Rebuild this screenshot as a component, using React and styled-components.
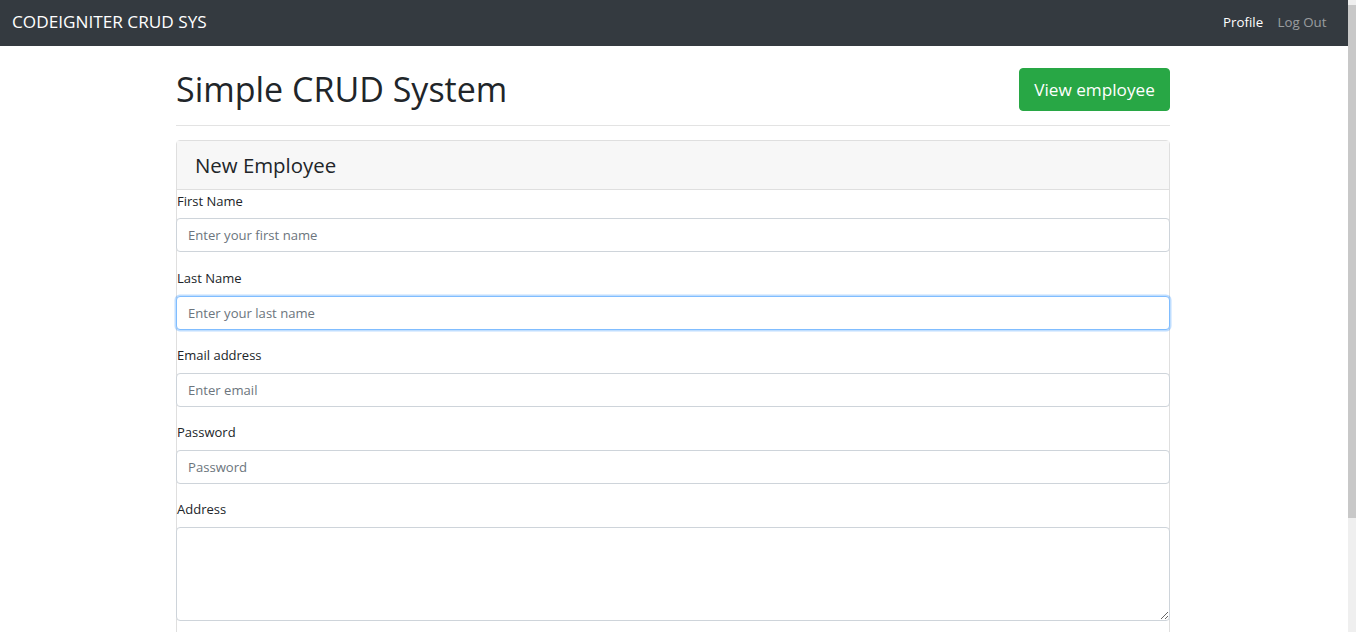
import React from "react";
import styled, { createGlobalStyle } from "styled-components";

const GlobalStyle = createGlobalStyle`
  html, body { margin: 0; padding: 0; height: 100%; overflow: hidden; }
  body {
    font-family: "Segoe UI", "Open Sans", "Noto Sans", sans-serif;
    font-size: 13.6px;
    color: #212529;
    background: #fff;
  }
  * { box-sizing: border-box; }
`;

const Shell = styled.div`
  display: flex;
  width: 1356px;
  height: 632px;
  overflow: hidden;
`;

const Page = styled.div`
  flex: 1;
  min-width: 0;
  overflow: hidden;
`;

const ScrollTrack = styled.div`
  width: 8px;
  background: #efefef;
  display: flex;
  flex-direction: column;
`;

const ScrollThumb = styled.div`
  height: 513px;
  margin-top: 5px;
  background: #c8c8c8;
`;

const Navbar = styled.nav`
  height: 46px;
  background: #343a40;
  display: flex;
  align-items: center;
  justify-content: space-between;
  padding: 0 14.4px 3px 12px;
`;

const Brand = styled.a`
  color: #fff;
  font-size: 17.2px;
  text-decoration: none;
`;

const NavLinks = styled.div`
  display: flex;
`;

const NavLink = styled.a`
  padding: 0 7.2px;
  font-size: 13.3px;
  color: ${(p) => (p.$active ? "#fff" : "rgba(255,255,255,.5)")};
  text-decoration: none;
`;

const Container = styled.div`
  width: 994px;
  margin: 0 auto 0 176px;
  padding-top: 22px;
`;

const HeaderRow = styled.div`
  display: flex;
  align-items: center;
  justify-content: space-between;
`;

const Title = styled.h1`
  margin: 0;
  font-size: 34px;
  font-weight: 400;
  line-height: 1.2;
`;

const GreenButton = styled.button`
  background: #28a745;
  border: 1px solid #28a745;
  color: #fff;
  font-family: inherit;
  font-size: 17.2px;
  line-height: 1.5;
  padding: 0;
  white-space: nowrap;
  border-radius: 4px;
  height: 43px;
  width: 151px;
`;

const Rule = styled.hr`
  border: 0;
  border-top: 1px solid #e3e3e3;
  margin: 14px 0 14px;
`;

const Card = styled.div`
  border: 1px solid #dfdfdf;
  border-radius: 4px;
`;

const CardHeader = styled.div`
  background: #f7f7f7;
  border-bottom: 1px solid #dfdfdf;
  padding: 11px 18px 10.6px;
`;

const CardTitle = styled.h4`
  margin: 0;
  font-size: 20.4px;
  font-weight: 400;
  line-height: 26px;
`;

const Form = styled.form`
  margin: 0 -1px;
`;

const Group = styled.div`
  margin-bottom: 14.4px;
`;

const Label = styled.label`
  display: block;
  margin: 0 0 6.2px 1px;
  padding-top: 1px;
  font-size: 13px;
  line-height: 21.6px;
`;

const Input = styled.input`
  display: block;
  width: 100%;
  height: 34px;
  padding: 5px 11px;
  font-family: inherit;
  font-size: 13.1px;
  color: #495057;
  border: 1px solid ${(p) => (p.$focused ? "#80bdff" : "#ced4da")};
  border-radius: 4px;
  box-shadow: ${(p) => (p.$focused ? "0 0 0 1.5px rgba(0,123,255,.25)" : "none")};
  outline: none;
  &::placeholder { color: #6c757d; }
`;

const TextArea = styled.textarea`
  display: block;
  width: 100%;
  height: 94px;
  font-family: inherit;
  font-size: 13.1px;
  border: 1px solid #ced4da;
  border-radius: 4px;
  outline: none;
`;

const fields = [
  { label: "First Name", placeholder: "Enter your first name" },
  { label: "Last Name", placeholder: "Enter your last name", focused: true },
  { label: "Email address", placeholder: "Enter email" },
  { label: "Password", placeholder: "Password", type: "password" },
];

export default function App() {
  return (
    <>
      <GlobalStyle />
      <Shell>
        <Page>
          <Navbar>
            <Brand href="#">CODEIGNITER CRUD SYS</Brand>
            <NavLinks>
              <NavLink href="#" $active>Profile</NavLink>
              <NavLink href="#">Log Out</NavLink>
            </NavLinks>
          </Navbar>
          <Container>
            <HeaderRow>
              <Title>Simple CRUD System</Title>
              <GreenButton>View employee</GreenButton>
            </HeaderRow>
            <Rule />
            <Card>
              <CardHeader>
                <CardTitle>New Employee</CardTitle>
              </CardHeader>
              <Form>
                {fields.map((f) => (
                  <Group key={f.label}>
                    <Label>{f.label}</Label>
                    <Input type={f.type || "text"} placeholder={f.placeholder} $focused={f.focused} />
                  </Group>
                ))}
                <Group>
                  <Label>Address</Label>
                  <TextArea />
                </Group>
              </Form>
            </Card>
          </Container>
        </Page>
        <ScrollTrack>
          <ScrollThumb />
        </ScrollTrack>
      </Shell>
    </>
  );
}
